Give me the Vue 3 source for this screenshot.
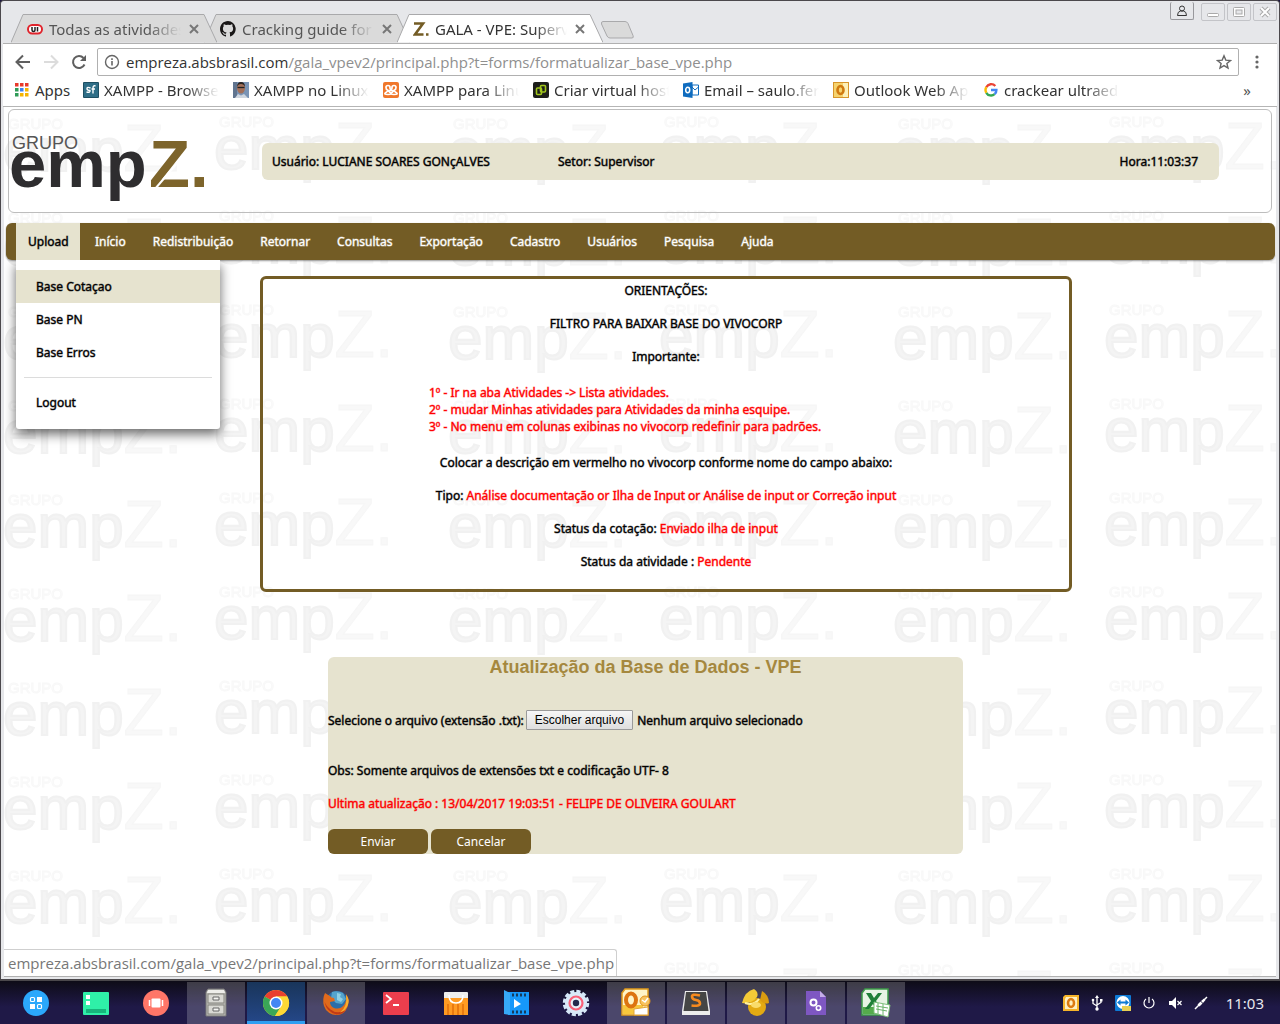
<script setup>
import { ref } from 'vue'

const tabs = [
  { id: 'ui', title: 'Todas as atividades', active: false },
  { id: 'github', title: 'Cracking guide for U', active: false },
  { id: 'gala', title: 'GALA - VPE: Supervisor', active: true },
]

const bookmarks = [
  { id: 'sf', title: 'XAMPP - Browse /' },
  { id: 'photo', title: 'XAMPP no Linux -' },
  { id: 'xampp', title: 'XAMPP para Linux' },
  { id: 'vhost', title: 'Criar virtual hosts' },
  { id: 'mail', title: 'Email – saulo.ferre' },
  { id: 'owa', title: 'Outlook Web App' },
  { id: 'google', title: 'crackear ultraedit' },
]

const menu = [
  'Início', 'Redistribuição', 'Retornar', 'Consultas', 'Exportação',
  'Cadastro', 'Usuários', 'Pesquisa', 'Ajuda',
]

const dock = [
  { id: 'launcher', name: 'Menu' },
  { id: 'desktop', name: 'Área de trabalho' },
  { id: 'multitask', name: 'Multitarefa' },
  { id: 'files', name: 'Arquivos', open: true },
  { id: 'chrome', name: 'Chrome', open: true, active: true },
  { id: 'firefox', name: 'Firefox', open: true },
  { id: 'terminal', name: 'Terminal' },
  { id: 'store', name: 'Loja' },
  { id: 'movie', name: 'Filmes' },
  { id: 'settings', name: 'Configurações' },
  { id: 'outlook', name: 'Outlook', open: true },
  { id: 'sublime', name: 'Sublime', open: true },
  { id: 'navicat', name: 'Navicat', open: true },
  { id: 'script', name: 'Script', open: true },
  { id: 'excel', name: 'Excel', open: true },
]

const fileInput = ref(null)
const fileName = ref('Nenhum arquivo selecionado')
function pickFile() {
  fileInput.value.click()
}
function onFile(e) {
  fileName.value = e.target.files[0]?.name ?? 'Nenhum arquivo selecionado'
}
</script>

<template>
  <div class="screen">
    <div class="window">
      <div class="tabstrip">
        <div class="tabs">
          <div v-for="t in tabs" :key="t.id" class="tab" :class="{ active: t.active }">
            <svg class="tab-shape" viewBox="0 0 206 29" preserveAspectRatio="none" aria-hidden="true">
              <path d="M0 28.5 L12 .5 H193 L206 28.5" />
            </svg>
            <svg v-if="t.id === 'ui'" class="fav" viewBox="0 0 16 16" aria-hidden="true">
              <rect x="1" y="4" width="14" height="8.500" rx="4.200" fill="#fff" stroke="#e0242c" stroke-width="2" />
              <path d="M5 6v3q0 1.500 1.500 1.500T8 9V6M10.500 6v4.500" fill="none" stroke="#222" stroke-width="1.500" />
            </svg>
            <svg v-else-if="t.id === 'github'" class="fav" viewBox="0 0 16 16" aria-hidden="true">
              <path fill="#191717" d="M8 0C3.580 0 0 3.580 0 8c0 3.540 2.290 6.530 5.470 7.590.4.070.55-.17.55-.38v-1.490c-2.230.48-2.700-1.070-2.700-1.070-.36-.93-.89-1.170-.89-1.170-.73-.5.05-.49.05-.49.8.06 1.230.83 1.230.83.72 1.220 1.870.87 2.330.66.07-.52.28-.87.51-1.070-1.780-.2-3.640-.89-3.640-3.950 0-.87.31-1.590.82-2.150-.08-.2-.36-1.020.08-2.120 0 0 .67-.21 2.200.82a7.600 7.600 0 0 1 4 0c1.530-1.040 2.200-.82 2.200-.82.44 1.100.16 1.920.08 2.120.51.56.82 1.270.82 2.150 0 3.070-1.870 3.750-3.650 3.950.29.25.54.73.54 1.480v2.200c0 .21.150.46.55.38A8 8 0 0 0 8 0z" />
            </svg>
            <svg v-else class="fav" viewBox="0 0 16 16" aria-hidden="true">
              <path d="M1 2.500h9L2 13.500h8.500M13 13.500h2.500" fill="none" stroke="#735c25" stroke-width="2.600" />
            </svg>
            <span class="tab-title">{{ t.title }}</span>
            <button class="tab-close" type="button" aria-label="Fechar aba">
              <svg viewBox="0 0 10 10"><path d="M1 1l8 8M9 1l-8 8" stroke="#777" stroke-width="2" /></svg>
            </button>
          </div>
          <button class="new-tab" type="button" aria-label="Nova aba">
            <svg viewBox="0 0 36 18"><path d="M4 .5H26q2 0 3 2l5 12q1 2.500-1 2.500H11q-2 0-3-2L2.500 3Q2 .5 4 .5z" fill="#dadada" stroke="#a9a9ab" /></svg>
          </button>
        </div>
        <div class="win-controls">
          <button class="profile" type="button" aria-label="Perfil">
            <svg viewBox="0 0 12 12"><circle cx="6" cy="3.500" r="2.500" fill="none" stroke="#333" /><path d="M1.500 10.500q0-4 3-4.500h3q3 .5 3 4.500z" fill="none" stroke="#333" /></svg>
          </button>
          <button class="wbtn" type="button" aria-label="Minimizar">
            <svg viewBox="0 0 12 12"><rect x=".5" y="7.500" width="11" height="3" rx="1" fill="#fff" stroke="#aaa" /></svg>
          </button>
          <button class="wbtn" type="button" aria-label="Maximizar">
            <svg viewBox="0 0 12 12"><rect x=".5" y="1.500" width="11" height="9" rx="1" fill="#fff" stroke="#aaa" /><rect x="3" y="4" width="6" height="4" fill="#e6e7ea" stroke="#aaa" /></svg>
          </button>
          <button class="wbtn" type="button" aria-label="Fechar">
            <svg viewBox="0 0 12 12"><path d="M2 2l8 8M10 2l-8 8" stroke="#aaa" stroke-width="4" /><path d="M2 2l8 8M10 2l-8 8" stroke="#fff" stroke-width="2" /></svg>
          </button>
        </div>
      </div>

      <div class="toolbar">
        <button type="button" aria-label="Voltar"><svg viewBox="0 0 16 16"><path d="M15 8H2M8 1.500L1.500 8L8 14.500" fill="none" stroke="#5f5f5f" stroke-width="2" /></svg></button>
        <button type="button" aria-label="Avançar"><svg viewBox="0 0 16 16"><path d="M1 8H14M8 1.500L14.500 8L8 14.500" fill="none" stroke="#dcdcdc" stroke-width="2" /></svg></button>
        <button type="button" aria-label="Recarregar"><svg viewBox="0 0 16 16"><path d="M13.500 10.500A6 6 0 1 1 12.500 4" fill="none" stroke="#5f5f5f" stroke-width="2" /><path d="M15 1v6H9z" fill="#5f5f5f" /></svg></button>
        <div class="omnibox">
          <svg class="info" viewBox="0 0 16 16" aria-hidden="true"><circle cx="8" cy="8" r="6.500" fill="none" stroke="#666" stroke-width="1.400" /><path d="M8 7v4.500M8 4.300v1.600" stroke="#666" stroke-width="1.600" /></svg>
          <span class="url"><b>empreza.absbrasil.com</b>/gala_vpev2/principal.php?t=forms/formatualizar_base_vpe.php</span>
          <svg class="star" viewBox="0 0 16 16" aria-hidden="true"><path d="M8 1.800l1.800 4.300 4.700.4-3.600 3 1.100 4.600L8 11.600l-4 2.500 1.100-4.600-3.600-3 4.700-.4z" fill="none" stroke="#666" stroke-width="1.400" /></svg>
        </div>
        <button class="more" type="button" aria-label="Menu"><svg viewBox="0 0 4 16"><circle cx="2" cy="3" r="1.600" fill="#666" /><circle cx="2" cy="8" r="1.600" fill="#666" /><circle cx="2" cy="13" r="1.600" fill="#666" /></svg></button>
      </div>

      <div class="bookmarks">
        <a class="apps" href="#">
          <svg viewBox="0 0 16 16" aria-hidden="true">
            <g fill="#e8392b"><rect x="1" y="1" width="3.500" height="3.500" /><rect x="6" y="1" width="3.500" height="3.500" /><rect x="11" y="1" width="3.500" height="3.500" /></g>
            <rect x="1" y="6" width="3.500" height="3.500" fill="#2f9b57" /><rect x="6" y="6" width="3.500" height="3.500" fill="#3c82f0" /><rect x="11" y="6" width="3.500" height="3.500" fill="#f5b400" />
            <rect x="1" y="11" width="3.500" height="3.500" fill="#2f9b57" /><rect x="6" y="11" width="3.500" height="3.500" fill="#f5b400" /><rect x="11" y="11" width="3.500" height="3.500" fill="#f5b400" />
          </svg>
          Apps
        </a>
        <a v-for="b in bookmarks" :key="b.id" class="bookmark" href="#">
          <svg viewBox="0 0 16 16" aria-hidden="true">
            <template v-if="b.id === 'sf'"><rect width="16" height="16" rx="1" fill="#1d4f63" /><rect x="1" y="1" width="14" height="14" fill="#2f6e87" /><path d="M7.500 6Q4 4.500 4 6.500T7 8.500Q7.500 11 3.500 10M12.500 4Q10 3 10 6v5.500M8.500 7h3.500" fill="none" stroke="#fff" stroke-width="1.400" /></template>
            <template v-else-if="b.id === 'photo'"><rect width="16" height="16" fill="#7a94b5" /><path d="M0 0h4v16H0z" fill="#60748f" /><ellipse cx="8" cy="6" rx="4" ry="5.500" fill="#a3705a" /><path d="M4 5Q4 0 8 0t4 5q-1-3-4-3T4 5z" fill="#2b2523" /><path d="M4.500 5.500h7" stroke="#222" stroke-width="1.300" /><path d="M2 16l3-4 3 1.500L11 12l4 4z" fill="#cfd6df" /></template>
            <template v-else-if="b.id === 'xampp'"><rect width="16" height="16" rx="2" fill="#f0772b" /><path d="M3 5.500Q3 3.500 5 3.500T7 5.500 8 7.500 9 5.500 11 3.500 13 5.500 11.500 8 13 10.500 11 12.500 9 10.500 8 8.500 7 10.500 5 12.500 3 10.500 4.500 8 3 5.500z" fill="none" stroke="#fff" stroke-width="1.700" /></template>
            <template v-else-if="b.id === 'vhost'"><rect width="16" height="16" rx="2" fill="#1c1d1a" /><rect x="3.500" y="6" width="5" height="6.500" rx="1" fill="none" stroke="#a0c51c" stroke-width="1.600" /><rect x="7.500" y="3.500" width="5" height="6.500" rx="1" fill="none" stroke="#a0c51c" stroke-width="1.600" /></template>
            <template v-else-if="b.id === 'mail'"><path d="M9 3h6.500v10H9z" fill="#fff" stroke="#0f6cbf" /><path d="M9 5l3 3 3.500-3" fill="none" stroke="#0f6cbf" /><path d="M0 1.500L9.500 0v16L0 14.500z" fill="#0f6cbf" /><ellipse cx="4.700" cy="8" rx="2" ry="2.700" fill="none" stroke="#fff" stroke-width="1.500" /></template>
            <template v-else-if="b.id === 'owa'"><rect x=".5" y=".5" width="15" height="15" fill="#f6d36d" stroke="#d7952a" /><path d="M10 1h5v14H10z" fill="#fdf0b8" /><ellipse cx="7.500" cy="8" rx="3" ry="4" fill="none" stroke="#d07a10" stroke-width="2.600" /></template>
            <template v-else><g fill="none" stroke-width="2.400"><path d="M12.300 4A5.500 5.500 0 0 0 3.300 5.200" stroke="#ea4335" /><path d="M3.300 5.200a5.500 5.500 0 0 0 0 5.600" stroke="#fbbc05" /><path d="M3.300 10.800a5.500 5.500 0 0 0 8.300 1.400" stroke="#34a853" /><path d="M11.600 12.200A5.500 5.500 0 0 0 13.400 8H8" stroke="#4285f4" /></g></template>
          </svg>
          <span>{{ b.title }}</span>
        </a>
        <button class="overflow" type="button" aria-label="Mais favoritos">»</button>
      </div>

      <main class="page">
        <svg class="watermark" aria-hidden="true">
          <defs>
            <pattern id="empz-tile" x="0" y="7" width="445" height="94" patternUnits="userSpaceOnUse">
              <g class="wm-mark">
                <text x="4" y="15" class="wm-small">GRUPO</text>
                <text x="-1" y="57">emp<tspan class="wm-z">Z.</tspan></text>
                <text x="215" y="13" class="wm-small">GRUPO</text>
                <text x="210" y="55">emp<tspan class="wm-z">Z.</tspan></text>
              </g>
            </pattern>
          </defs>
          <rect width="100%" height="100%" fill="url(#empz-tile)" />
        </svg>

        <header class="head">
          <svg class="logo" viewBox="0 0 200 70" role="img" aria-label="Grupo empZ.">
            <text x="3" y="16" class="logo-small">GRUPO</text>
            <text x="0" y="54" class="logo-big">emp<tspan x="140" class="logo-z">Z.</tspan></text>
            <path d="M146 56L181 15" stroke="#fff" stroke-width="2" />
          </svg>
          <div class="infobar">
            <span class="user">Usuário: LUCIANE SOARES GONçALVES</span>
            <span>Setor: Supervisor</span>
            <span class="hour">Hora:11:03:37</span>
          </div>
        </header>

        <nav class="nav">
          <div class="nav-item open">
            <a href="#">Upload</a>
            <div class="dropdown">
              <a href="#" class="hover">Base Cotaçao</a>
              <a href="#">Base PN</a>
              <a href="#">Base Erros</a>
              <hr />
              <a href="#">Logout</a>
            </div>
          </div>
          <div v-for="m in menu" :key="m" class="nav-item"><a href="#">{{ m }}</a></div>
        </nav>

        <section class="guide">
          <p>ORIENTAÇÕES:</p>
          <p>FILTRO PARA BAIXAR BASE DO VIVOCORP</p>
          <p>Importante:</p>
          <div class="steps">
            <div>1º - Ir na aba Atividades -&gt; Lista atividades.</div>
            <div>2º - mudar Minhas atividades para Atividades da minha esquipe.</div>
            <div>3º - No menu em colunas exibinas no vivocorp redefinir para padrões.</div>
          </div>
          <p>Colocar a descrição em vermelho no vivocorp conforme nome do campo abaixo:</p>
          <p>Tipo: <em>Análise documentação or Ilha de Input or Análise de input or Correção input</em></p>
          <p>Status da cotação: <em>Enviado ilha de input</em></p>
          <p>Status da atividade : <em>Pendente</em></p>
        </section>

        <form class="upload" @submit.prevent>
          <h1>Atualização da Base de Dados - VPE</h1>
          <div class="file-row">
            <label for="arquivo">Selecione o arquivo (extensão .txt):</label>
            <input id="arquivo" ref="fileInput" class="file-native" type="file" accept=".txt" tabindex="-1" @change="onFile" />
            <button class="file-btn" type="button" @click="pickFile">Escolher arquivo</button>
            <span class="file-name">{{ fileName }}</span>
          </div>
          <p class="obs">Obs: Somente arquivos de extensões txt e codificação UTF- 8</p>
          <p class="last">Ultima atualização : 13/04/2017 19:03:51 - FELIPE DE OLIVEIRA GOULART</p>
          <div class="actions">
            <button type="submit">Enviar</button>
            <button type="button">Cancelar</button>
          </div>
        </form>

        <div class="status">empreza.absbrasil.com/gala_vpev2/principal.php?t=forms/formatualizar_base_vpe.php</div>
      </main>
    </div>

    <footer class="taskbar">
      <div class="dock">
        <button v-for="d in dock" :key="d.id" type="button" :aria-label="d.name" :class="{ open: d.open, active: d.active }">
          <svg viewBox="0 0 32 32" aria-hidden="true">
            <template v-if="d.id === 'launcher'"><circle cx="16" cy="16" r="13" fill="#2ba8fb" /><g fill="none" stroke="#fff" stroke-width="1.200"><rect x="10.500" y="10.500" width="4" height="4" rx="1" /><rect x="17.500" y="17.500" width="4" height="4" rx="1" /></g><rect x="17" y="10" width="5" height="5" fill="#fff" /><rect x="10" y="17" width="5" height="5" fill="#fff" /></template>
            <template v-else-if="d.id === 'desktop'"><rect x="3" y="5" width="26" height="23" rx="1" fill="#2ff0a8" /><rect x="6" y="8" width="4" height="4" fill="#fff" /><rect x="6" y="14" width="4" height="4" fill="#fff" /><rect x="6" y="22" width="20" height="4" fill="#17b57c" /></template>
            <template v-else-if="d.id === 'multitask'"><circle cx="16" cy="16" r="13" fill="#ff7668" /><rect x="11.500" y="11.500" width="9" height="9" rx="1" fill="#fff" /><path d="M9.500 13v6M22.500 13v6" stroke="#fff" stroke-width="1.500" /></template>
            <template v-else-if="d.id === 'files'"><path d="M8 2h16l2 3v24H6V5z" fill="#bdbdb8" stroke="#777" /><path d="M8 3h16l1 3H7z" fill="#eeeeea" /><rect x="8" y="7" width="16" height="9" fill="#d9d9d4" stroke="#83837d" /><rect x="8" y="18" width="16" height="9" fill="#d9d9d4" stroke="#83837d" /><path d="M13 10v3h6v-3zM13 21v3h6v-3z" fill="#f5f5f2" stroke="#666" /></template>
            <template v-else-if="d.id === 'chrome'"><circle cx="16" cy="16" r="13" fill="#fc3" /><path d="M16 16L4.700 9.500A13 13 0 0 1 27.300 9.500H16z" fill="#e8402f" /><path d="M4.700 9.500A13 13 0 0 0 15 29l6-9.500-5-3.500z" fill="#3aa757" /><path d="M16 9.500H27.300A13 13 0 0 1 15 29l6.500-10z" fill="#fdd835" /><circle cx="16" cy="16" r="6.500" fill="#fff" /><circle cx="16" cy="16" r="5" fill="#4487f3" /></template>
            <template v-else-if="d.id === 'firefox'"><circle cx="17" cy="15" r="11" fill="#2b6ea8" /><path d="M12 5q5-2 11 1l3 6-4 5-6-1-5-5z" fill="#55a4cc" /><path d="M17 6l4 1-1 3 3 2-2 3-4-2z" fill="#8fd0e4" /><path d="M5 6Q2 12 4 19A12.500 12.500 0 0 0 28.500 15Q29 11 26 7q1 7-2 11-4 5-10 3-4-2-4-6l5-1-1-3q-3 0-4-2Q8 8 5 6z" fill="#e06a1c" /><path d="M4.500 15q2 10 12 12.500 6 0 9-4-9 4-15-1-4-3-6-7.500z" fill="#c13a16" /><path d="M26 7.500q4 5 2 10-2 6-8 8 8-6 6-18z" fill="#f8b02c" /></template>
            <template v-else-if="d.id === 'terminal'"><rect x="3" y="5" width="26" height="23" rx="1" fill="#ec3e4d" /><path d="M6 8l5 4-5 4M13 18h6" fill="none" stroke="#fff" stroke-width="1.800" /></template>
            <template v-else-if="d.id === 'store'"><rect x="4" y="5" width="24" height="23" rx="1" fill="#eee" /><path d="M4 11h24v17H4z" fill="#ff9b22" /><path d="M8 17v11M13 17v11M18 17v11M23 17v11" stroke="#e97a10" stroke-width="2" /><path d="M9 8q0 8 7 8t7-8" fill="none" stroke="#fff" stroke-width="1.500" /></template>
            <template v-else-if="d.id === 'movie'"><path d="M8 5h21v23H8z" fill="#1698fa" /><path d="M4 3l6 3v22l-6-1z" fill="#37a9f7" /><path d="M12 8h15M12 25h15" stroke="#163b5c" stroke-width="3" stroke-dasharray="2 2" /><path d="M14 12l7 5-7 4z" fill="#fff" /></template>
            <template v-else-if="d.id === 'settings'"><circle cx="16" cy="16" r="11" fill="#dbeaf8" /><circle cx="16" cy="16" r="11.500" fill="none" stroke="#d6e8f8" stroke-width="3.500" stroke-dasharray="4 2.020" /><circle cx="16" cy="16" r="6.500" fill="#e8f1fa" stroke="#fa6178" stroke-width="2.200" /><circle cx="16" cy="16" r="3.200" fill="#242a4d" /></template>
            <template v-else-if="d.id === 'outlook'"><path d="M5 2h23v26H2V6z" fill="#fff4c7" stroke="#e19b1a" stroke-width="1.500" /><path d="M3 18h20v9H3z" fill="#f8c73d" /><ellipse cx="11" cy="13" rx="5" ry="6.500" fill="none" stroke="#dd7410" stroke-width="4" /><circle cx="25" cy="14" r="5" fill="#f7c35f" stroke="#e4941e" /><path d="M22 13l3 2 3-4" fill="none" stroke="#fff" stroke-width="1.500" /><path d="M14 22l14-2v8H14z" fill="#fff" stroke="#e3a53a" /></template>
            <template v-else-if="d.id === 'sublime'"><path d="M5 4h22l3 20v4H2v-4z" fill="#ececec" /><path d="M6 5h20l2.500 19h-25z" fill="#454545" /><path d="M20 8.500Q12 6.500 12 9.500t4 3.500 4 3.500-8.500 2" fill="none" stroke="#f68a1e" stroke-width="2.600" /></template>
            <template v-else-if="d.id === 'navicat'"><circle cx="17" cy="20" r="9" fill="#e3aa12" /><path d="M2 16Q5 4 14 2q5 3 3 8-5 7-15 6z" fill="#f4ca37" /><path d="M22 4q7 4 7 12-5 2-9-3z" fill="#d99c10" /><path d="M5 16q9 3 14-4" stroke="#fff1a0" stroke-width="2" fill="none" /><ellipse cx="16" cy="18" rx="5" ry="3" fill="#f9dc6a" /></template>
            <template v-else-if="d.id === 'script'"><path d="M6 4h14l6 6v18H6z" fill="#7e57c2" /><path d="M20 4l6 6h-6z" fill="#c4aee8" /><circle cx="13.500" cy="15.500" r="3" fill="none" stroke="#fff" stroke-width="2" /><circle cx="18.500" cy="21" r="2.200" fill="none" stroke="#fff" stroke-width="1.600" /></template>
            <template v-else><path d="M5 2h23v26H2V6z" fill="#e7f4e4" stroke="#3d9a48" stroke-width="1.500" /><path d="M3 20h20v7H3z" fill="#55ab4c" /><path d="M6 6h5l3 5 4-5h4l-6 8 5 8h-5l-3-5-4 5H5l6-8z" fill="#1f7f37" /><path d="M14 15l16 3-2 12-14-4z" fill="#fff" stroke="#7fbf7c" /><path d="M16 19l12 2M16 22l11 2M18 16v11M23 17v11" stroke="#6bb46a" /></template>
          </svg>
        </button>
      </div>
      <div class="tray">
        <svg viewBox="0 0 16 16" aria-hidden="true"><path d="M2 0h14v16H0V2z" fill="#f6b42a" /><path d="M3 2h11v12H2V4z" fill="#fff0c0" /><ellipse cx="8" cy="8" rx="3" ry="4" fill="none" stroke="#dd7a10" stroke-width="2.500" /></svg>
        <svg viewBox="0 0 16 16" aria-hidden="true"><path d="M8 2v12M4 5.500v3l4 2.500M12 5.500v2L8 10" fill="none" stroke="#fff" stroke-width="1.300" /><path d="M8 0l2 3H6z" fill="#fff" /><circle cx="8" cy="14" r="1.700" fill="#fff" /><circle cx="4" cy="5" r="1.300" fill="#fff" /><path d="M11 4h2.500v2.500H11z" fill="#fff" /></svg>
        <svg viewBox="0 0 16 16" aria-hidden="true"><rect width="16" height="16" rx="1" fill="#0e7bd6" /><circle cx="8" cy="7.500" r="6.500" fill="#fff" /><path d="M2 7.500l3.500-3v2h5v-2l3.500 3-3.500 3v-2h-5v2z" fill="#0e7bd6" /><rect x="7" y="11" width="9" height="5" fill="#e8cf52" /></svg>
        <svg viewBox="0 0 16 16" aria-hidden="true"><path d="M5 4a5 5 0 1 0 6 0M8 2v6" fill="none" stroke="#fff" stroke-width="1.200" /></svg>
        <svg viewBox="0 0 16 16" aria-hidden="true"><path d="M2 6h3l4-4v12l-4-4H2z" fill="#fff" /><path d="M10.500 6l4 4M14.500 6l-4 4" stroke="#fff" stroke-width="1.200" /></svg>
        <svg viewBox="0 0 16 16" aria-hidden="true"><path d="M2 14l4-4M10 6l4-4" stroke="#fff" stroke-width="1.500" /><path d="M4.500 9.500l3-3 2 2-3 3zM8 6l3-2.500L12.500 5 10 8z" fill="#fff" /></svg>
        <time>11:03</time>
      </div>
    </footer>
  </div>
</template>

<style>
body {
  margin: 0;
}
</style>

<style scoped>
.screen {
  display: flex;
  flex-direction: column;
  min-height: 100vh;
  box-sizing: border-box;
  background: #1c1640;
  font-family: "Noto Sans", "Open Sans", sans-serif;
  font-size: 12px;
  line-height: 17px;
  color: #000;
}
button {
  font: inherit;
  margin: 0;
  padding: 0;
  border: 0;
  background: none;
}
a {
  color: inherit;
  text-decoration: none;
}
svg {
  display: block;
  flex: none;
}
.window {
  flex: 1;
  display: flex;
  flex-direction: column;
  background: #e6e7ea;
  border: 1px solid #4b484c;
  border-radius: 4px 4px 0 0;
  border-bottom-width: 2px;
  padding: 0 2px 2px;
}

/* browser chrome */
.tabstrip {
  display: flex;
  justify-content: space-between;
  height: 42px;
  padding-left: 8px;
}
.tabs {
  display: flex;
  align-items: flex-end;
}
.tab {
  position: relative;
  display: flex;
  align-items: center;
  width: 206px;
  height: 29px;
  box-sizing: border-box;
  padding: 0 18px 0 16px;
  margin-right: -13px;
  color: #555;
  z-index: 1;
}
.tab:first-child {
  z-index: 2;
}
.tab.active {
  z-index: 3;
  color: #333;
}
.tab-shape {
  position: absolute;
  inset: 0;
  width: 100%;
  height: 100%;
}
.tab-shape path {
  fill: #dadada;
  stroke: #a9a9ab;
}
.active .tab-shape path {
  fill: #fff;
}
.fav {
  position: relative;
  width: 16px;
  height: 16px;
}
.tab-title {
  position: relative;
  flex: 1;
  margin: 0 8px 0 6px;
  overflow: hidden;
  white-space: nowrap;
  font-size: 15px;
  line-height: 22px;
  mask-image: linear-gradient(to right, #000 75%, transparent);
}
.tab-close {
  position: relative;
  width: 10px;
  height: 10px;
}
.new-tab {
  width: 36px;
  height: 18px;
  margin: 0 0 4px 9px;
}
.win-controls {
  display: flex;
  align-items: flex-start;
  gap: 2px;
}
.profile,
.wbtn {
  display: flex;
  align-items: center;
  justify-content: center;
  width: 24px;
  height: 18px;
  box-sizing: border-box;
  margin-top: 2px;
  border: 1px solid #c3c4c8;
  border-radius: 2px;
}
.profile {
  margin: 1px 5px 0 0;
  border-color: #98989c;
  border-top: 0;
}
.profile svg,
.wbtn svg {
  width: 12px;
  height: 12px;
}
.toolbar {
  display: flex;
  align-items: center;
  gap: 12px;
  height: 36px;
  padding: 0 18px 0 12px;
  background: #fff;
  border-top: 1px solid #b0b0b0;
}
.toolbar button svg {
  width: 16px;
  height: 16px;
}
.toolbar .more {
  margin-left: 4px;
}
.toolbar .more svg {
  width: 4px;
}
.omnibox {
  flex: 1;
  display: flex;
  align-items: center;
  height: 26px;
  margin-left: -2px;
  padding: 0 6px;
  border: 1px solid #b0b0b0;
  border-radius: 2px;
  min-width: 0;
}
.info,
.star {
  width: 16px;
  height: 16px;
}
.url,
.status {
  font-family: "Open Sans", "Noto Sans", sans-serif;
  font-size: 15px;
  line-height: 22px;
}
.url {
  flex: 1;
  margin-left: 6px;
  overflow: hidden;
  white-space: nowrap;
  color: #8f8f8f;
}
.url b {
  font-weight: 400;
  color: #333;
}
.bookmarks {
  display: flex;
  align-items: center;
  height: 19px;
  padding: 0 26px 7px 11px;
  background: #fff;
  border-bottom: 1px solid #b5b5b5;
  font-size: 15px;
  line-height: 22px;
  color: #333;
}
.apps,
.bookmark {
  display: flex;
  align-items: center;
}
.bookmarks svg {
  width: 16px;
  height: 16px;
  margin-right: 5px;
}
.apps {
  width: 69px;
}
.bookmark {
  width: 136px;
  margin-right: 14px;
  overflow: hidden;
  white-space: nowrap;
  mask-image: linear-gradient(to right, #000 75%, transparent);
}
.overflow {
  margin-left: auto;
  color: #555;
}

/* page */
.page {
  position: relative;
  flex: 1;
  margin: 0 1px;
  padding: 2px 0 0 2px;
  background: #fff;
  border-bottom: 1px solid #b0b0b0;
  overflow: hidden;
}
.watermark {
  position: absolute;
  inset: 0;
  width: 100%;
  height: 100%;
}
.wm-mark {
  font-family: "Liberation Sans", sans-serif;
  font-size: 62px;
  fill: #f4f4f4;
  stroke: #f1f1f1;
  stroke-width: 2px;
}
.wm-z {
  font-size: 66px;
  fill: #f8f8f8;
  stroke: #f6f6f6;
  stroke-width: 1px;
}
.wm-small {
  font-size: 15px;
  fill: #fcfcfc;
  stroke: #f8f8f8;
  stroke-width: 1px;
}
.head,
.nav,
.guide,
.upload {
  position: relative;
}
.head,
.nav,
.guide,
.file-row label,
.file-name,
.obs,
.last {
  -webkit-text-stroke: 1px color-mix(in srgb, currentColor 45%, transparent);
}
.head {
  display: flex;
  align-items: center;
  height: 102px;
  margin: 0 4px 0 2px;
  border: 1px solid #bdbdbd;
  border-radius: 6px;
}
.logo {
  width: 200px;
  height: 70px;
  margin: 14px 53px 0 0;
  -webkit-text-stroke: 0;
}
.logo-small {
  font-family: "Liberation Sans", sans-serif;
  font-size: 18px;
  fill: #555;
}
.logo-big {
  font-family: "Liberation Sans", sans-serif;
  font-size: 67px;
  font-weight: 700;
  fill: #2e2d2f;
}
.logo-z {
  fill: #7d642b;
}
.infobar {
  flex: 1;
  display: flex;
  align-items: center;
  height: 37px;
  box-sizing: border-box;
  margin-right: 52px;
  padding: 0 21px 0 10px;
  border-radius: 6px;
  background: #e6e3cf;
}
.user {
  width: 286px;
}
.hour {
  margin-left: auto;
}
.nav {
  z-index: 2;
  display: flex;
  gap: 3px;
  height: 37px;
  margin: 10px 1px 0 0;
  padding-left: 10px;
  border-radius: 6px;
  background: #735c25;
  box-shadow: 0 1px 2px rgba(0, 0, 0, 0.4);
  color: #fff;
}
.nav-item {
  position: relative;
}
.nav-item > a {
  display: block;
  padding: 10px 12px;
}
.nav-item.open {
  width: 64px;
  background: #e6e3cf;
  color: #000;
}
.dropdown {
  position: absolute;
  top: 100%;
  left: 0;
  width: 204px;
  padding: 10px 0;
  background: #fff;
  border-radius: 0 0 3px 3px;
  box-shadow: 0 5px 12px rgba(0, 0, 0, 0.6);
  clip-path: inset(0 -20px -30px -20px);
}
.dropdown a {
  display: block;
  padding: 8px 20px;
}
.dropdown .hover {
  background: #e6e3cf;
}
.dropdown hr {
  margin: 8px;
  border: 0;
  border-top: 1px solid #dcdcdc;
}
.guide {
  width: 64%;
  max-width: 806px;
  margin: 16px 0 0 254px;
  padding: 3px 0 19px;
  border: 3px solid #735c25;
  border-radius: 6px;
  text-align: center;
}
.guide p {
  margin: 0 0 16px;
}
.guide p:last-child {
  margin-bottom: 0;
}
.guide em {
  font-style: normal;
  color: #f00;
}
.steps {
  margin: 19px 0;
  padding-left: 166px;
  text-align: left;
  color: #f00;
}
.upload {
  width: 50%;
  margin: 65px 0 0 322px;
  border-radius: 6px;
  background: #e6e3cf;
}
.upload h1 {
  margin: 0;
  font: bold 18px/21px "Liberation Sans", sans-serif;
  text-align: center;
  color: #a5883f;
}
.file-row {
  display: flex;
  align-items: center;
  margin-top: 32px;
}
.file-native {
  position: absolute;
  width: 1px;
  height: 1px;
  opacity: 0;
}
.file-btn {
  height: 20px;
  margin: 0 4px 0 2px;
  padding: 0 8px;
  border: 1px solid #9a9a9a;
  border-radius: 1px;
  background: linear-gradient(#f6f6f6, #dedede);
  font: 12px/18px "Liberation Sans", sans-serif;
}
.obs {
  margin: 32px 0 0;
}
.last {
  margin: 16px 0 17px;
  color: #f00;
}
.actions {
  display: flex;
  gap: 3px;
}
.actions button {
  width: 100px;
  height: 25px;
  border-radius: 6px;
  background: #735c25;
  color: #fff;
}
.status {
  position: absolute;
  left: 0;
  bottom: 0;
  padding: 2px 2px 2px 4px;
  background: #fff;
  border: 1px solid #cfcfcf;
  border-width: 1px 1px 0 0;
  border-radius: 0 3px 0 0;
  color: #777;
}

/* desktop panel */
.taskbar {
  display: flex;
  align-items: center;
  justify-content: space-between;
  height: 43px;
  padding: 0 16px 0 7px;
  background: linear-gradient(#0e0c17, #1f1947 60%, #1f1947);
}
.dock {
  display: flex;
  gap: 2px;
}
.dock button {
  display: flex;
  align-items: center;
  justify-content: center;
  width: 58px;
  height: 42px;
  box-sizing: border-box;
}
.dock svg {
  width: 32px;
  height: 32px;
}
.dock .open {
  background: rgba(255, 255, 255, 0.2);
}
.dock .active {
  background: linear-gradient(#19355a, #25488a);
  box-shadow: inset 0 -3px #2f9ff2;
}
.tray {
  display: flex;
  align-items: center;
  gap: 10px;
}
.tray svg {
  width: 16px;
  height: 16px;
}
.tray time {
  margin-left: 7px;
  font-size: 15px;
  line-height: 22px;
  color: #e8e8ee;
}
</style>
